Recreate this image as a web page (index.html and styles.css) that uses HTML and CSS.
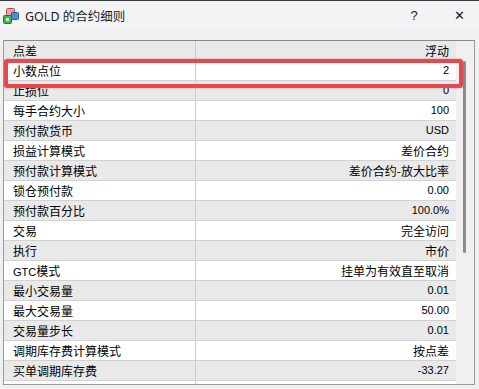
FILE: index.html
```html
<!DOCTYPE html>
<html lang="zh-CN">
<head>
    <meta charset="UTF-8">
    <title>GOLD 的合约细则</title>
    <link rel="stylesheet" href="styles.css">
</head>
<body>
    <!-- Title bar -->
    <div class="titlebar">
        <svg class="app-icon" width="16" height="17" viewBox="0 0 16 17">
            <rect x="3.5" y="0.5" width="8" height="7" rx="1" fill="#f0a0a0" stroke="#b05050"/>
            <rect x="8.5" y="4.5" width="7" height="7" rx="1" fill="#4a8ed8" stroke="#1f5aa0"/>
            <rect x="0.5" y="7.5" width="8" height="8" rx="1" fill="#3cb84a" stroke="#1c7a28"/>
            <rect x="3" y="10" width="3" height="3" fill="#c8f0c8"/>
        </svg>
        <span class="title">GOLD 的合约细则</span>
        <span class="title-btn help">?</span>
        <span class="title-btn close">✕</span>
    </div>

    <!-- Spec list -->
    <div class="content">
        <div class="listbox">
            <div class="rows">
                <div class="row"><div class="name">点差</div><div class="value">浮动</div></div>
                <div class="row"><div class="name">小数点位</div><div class="value num">2</div></div>
                <div class="row"><div class="name">止损位</div><div class="value num">0</div></div>
                <div class="row"><div class="name">每手合约大小</div><div class="value num">100</div></div>
                <div class="row"><div class="name">预付款货币</div><div class="value num">USD</div></div>
                <div class="row"><div class="name">损益计算模式</div><div class="value">差价合约</div></div>
                <div class="row"><div class="name">预付款计算模式</div><div class="value">差价合约-放大比率</div></div>
                <div class="row"><div class="name">锁仓预付款</div><div class="value num">0.00</div></div>
                <div class="row"><div class="name">预付款百分比</div><div class="value num">100.0%</div></div>
                <div class="row"><div class="name">交易</div><div class="value">完全访问</div></div>
                <div class="row"><div class="name">执行</div><div class="value">市价</div></div>
                <div class="row"><div class="name"><span class="num">GTC</span>模式</div><div class="value">挂单为有效直至取消</div></div>
                <div class="row"><div class="name">最小交易量</div><div class="value num">0.01</div></div>
                <div class="row"><div class="name">最大交易量</div><div class="value num">50.00</div></div>
                <div class="row"><div class="name">交易量步长</div><div class="value num">0.01</div></div>
                <div class="row"><div class="name">调期库存费计算模式</div><div class="value">按点差</div></div>
                <div class="row"><div class="name">买单调期库存费</div><div class="value num">-33.27</div></div>
                <div class="row filler"><div class="name"></div><div class="value"></div></div>
            </div>
            <div class="scrollbar">
                <div class="thumb"></div>
            </div>
            <!-- highlight annotation -->
            <div class="highlight"></div>
        </div>
    </div>
</body>
</html>
```

FILE: styles.css
```css
body {
    margin: 0;
    padding: 0;
    background: #f0f0f0;
    font-family: "Noto Sans CJK SC", sans-serif;
    font-size: 12px;
    color: #000;
}

.titlebar {
    height: 29px;
    border-top: 1px solid #3a3a3a;
    background: #f3f3f6;
    display: flex;
    align-items: center;
    padding-left: 3px;
}

.app-icon {
    margin-right: 6px;
    margin-top: 1px;
}

.title {
    font-family: "Noto Sans", "Noto Sans CJK SC", sans-serif;
    font-size: 12.5px;
    color: #1a1a1a;
    flex: 1;
}

.title-btn {
    font-family: "Liberation Sans", sans-serif;
    color: #1a1a1a;
    text-align: center;
}

.help {
    font-size: 13px;
    width: 20px;
    margin-right: 25px;
}

.close {
    font-size: 13px;
    width: 20px;
    margin-right: 10px;
}

.content {
    padding: 10px 4px 0 3px;
}

.listbox {
    position: relative;
    display: flex;
    height: 343px;
    border: 1px solid #9a9a9a;
    border-top-color: #8a8a8a;
    background: #fff;
}

.rows {
    width: 452px;
    background: #fff;
}

.row {
    display: flex;
    height: 20px;
    box-sizing: border-box;
    border-bottom: 1px solid #d2d2d2;
    line-height: 19px;
}

.row:nth-child(odd) {
    background: #e9e9e9;
}

.row.filler {
    height: 3px;
    background: #fff;
    border-bottom: none;
}

.name {
    width: 192px;
    border-right: 1px solid #cccccc;
    padding-left: 9px;
    box-sizing: border-box;
    white-space: nowrap;
}

.value {
    flex: 1;
    text-align: right;
    padding-right: 7px;
    white-space: nowrap;
}

.num {
    font-family: "Liberation Sans", sans-serif;
    font-size: 11px;
}

.scrollbar {
    flex: 1;
    background: #f0f0f0;
    padding: 20px 0 0 7px;
}

.thumb {
    width: 3px;
    height: 192px;
    background: #8c8c8c;
    border-radius: 2px;
}

.highlight {
    position: absolute;
    left: 0;
    top: 18px;
    width: 451px;
    height: 21px;
    border: 4px solid #e5484d;
    border-radius: 3px;
    box-shadow: 0 0 2px rgba(229, 72, 77, 0.6);
}
```
